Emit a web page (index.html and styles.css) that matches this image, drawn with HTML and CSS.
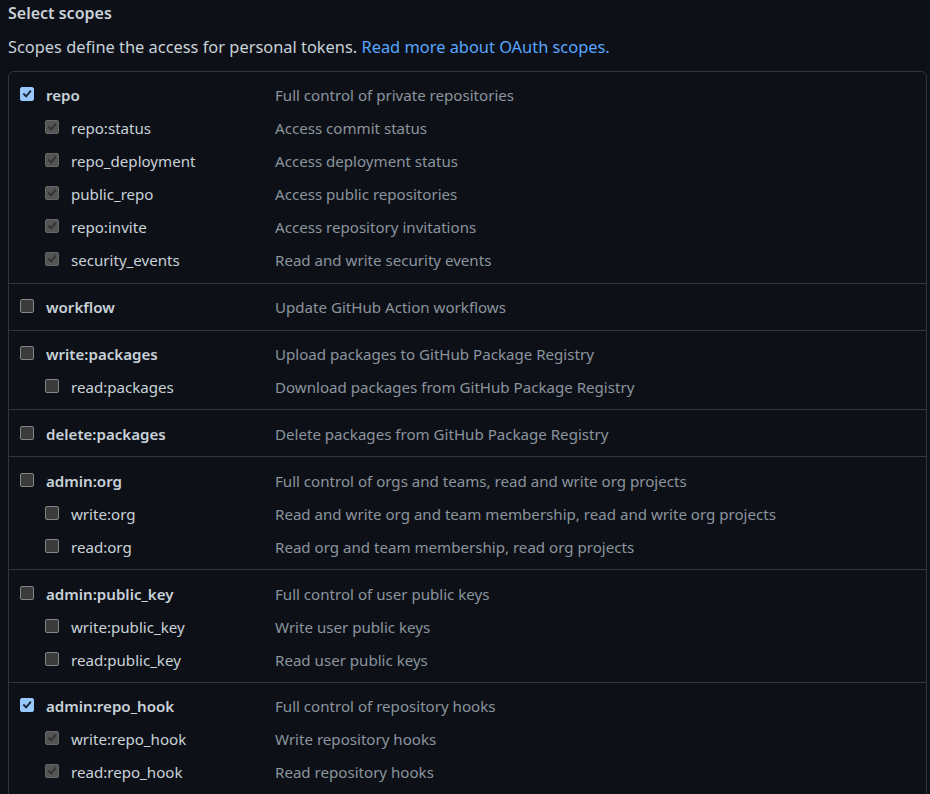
FILE: index.html
```html
<!DOCTYPE html>
<html lang="en">
<head>
<meta charset="utf-8">
<title>Select scopes</title>
<link rel="stylesheet" href="styles.css">
</head>
<body>
<div class="page">
  <h3 class="title">Select scopes</h3>
  <p class="note">Scopes define the access for personal tokens. <a href="#" class="link">Read more about OAuth scopes.</a></p>

  <div class="card">
    <div class="group">
      <div class="row parent"><span class="name"><span class="cb on"><svg viewBox="0 0 14 14"><path d="M3.5 7.2 6 9.8 10.8 4"/></svg></span><b>repo</b></span><span class="desc">Full control of private repositories</span></div>
      <div class="row child"><span class="name"><span class="cb dis"><svg viewBox="0 0 14 14"><path d="M3.5 7.2 6 9.8 10.8 4"/></svg></span>repo:status</span><span class="desc">Access commit status</span></div>
      <div class="row child"><span class="name"><span class="cb dis"><svg viewBox="0 0 14 14"><path d="M3.5 7.2 6 9.8 10.8 4"/></svg></span>repo_deployment</span><span class="desc">Access deployment status</span></div>
      <div class="row child"><span class="name"><span class="cb dis"><svg viewBox="0 0 14 14"><path d="M3.5 7.2 6 9.8 10.8 4"/></svg></span>public_repo</span><span class="desc">Access public repositories</span></div>
      <div class="row child"><span class="name"><span class="cb dis"><svg viewBox="0 0 14 14"><path d="M3.5 7.2 6 9.8 10.8 4"/></svg></span>repo:invite</span><span class="desc">Access repository invitations</span></div>
      <div class="row child"><span class="name"><span class="cb dis"><svg viewBox="0 0 14 14"><path d="M3.5 7.2 6 9.8 10.8 4"/></svg></span>security_events</span><span class="desc">Read and write security events</span></div>
    </div>
    <div class="group">
      <div class="row parent"><span class="name"><span class="cb"></span><b>workflow</b></span><span class="desc">Update GitHub Action workflows</span></div>
    </div>
    <div class="group">
      <div class="row parent"><span class="name"><span class="cb"></span><b>write:packages</b></span><span class="desc">Upload packages to GitHub Package Registry</span></div>
      <div class="row child"><span class="name"><span class="cb"></span>read:packages</span><span class="desc">Download packages from GitHub Package Registry</span></div>
    </div>
    <div class="group">
      <div class="row parent"><span class="name"><span class="cb"></span><b>delete:packages</b></span><span class="desc">Delete packages from GitHub Package Registry</span></div>
    </div>
    <div class="group">
      <div class="row parent"><span class="name"><span class="cb"></span><b>admin:org</b></span><span class="desc">Full control of orgs and teams, read and write org projects</span></div>
      <div class="row child"><span class="name"><span class="cb"></span>write:org</span><span class="desc">Read and write org and team membership, read and write org projects</span></div>
      <div class="row child"><span class="name"><span class="cb"></span>read:org</span><span class="desc">Read org and team membership, read org projects</span></div>
    </div>
    <div class="group">
      <div class="row parent"><span class="name"><span class="cb"></span><b>admin:public_key</b></span><span class="desc">Full control of user public keys</span></div>
      <div class="row child"><span class="name"><span class="cb"></span>write:public_key</span><span class="desc">Write user public keys</span></div>
      <div class="row child"><span class="name"><span class="cb"></span>read:public_key</span><span class="desc">Read user public keys</span></div>
    </div>
    <div class="group last">
      <div class="row parent"><span class="name"><span class="cb on"><svg viewBox="0 0 14 14"><path d="M3.5 7.2 6 9.8 10.8 4"/></svg></span><b>admin:repo_hook</b></span><span class="desc">Full control of repository hooks</span></div>
      <div class="row child"><span class="name"><span class="cb dis"><svg viewBox="0 0 14 14"><path d="M3.5 7.2 6 9.8 10.8 4"/></svg></span>write:repo_hook</span><span class="desc">Write repository hooks</span></div>
      <div class="row child"><span class="name"><span class="cb dis"><svg viewBox="0 0 14 14"><path d="M3.5 7.2 6 9.8 10.8 4"/></svg></span>read:repo_hook</span><span class="desc">Read repository hooks</span></div>
    </div>
  </div>
</div>
</body>
</html>
```

FILE: styles.css
```css
html, body {
  margin: 0;
  padding: 0;
  background: #0d1117;
}
body {
  font-family: "Noto Sans", "Open Sans", sans-serif;
  font-size: 15.1px;
  color: #c9d1d9;
  overflow: hidden;
  height: 794px;
}
.page {
  padding: 2px 3px 0 8px;
}
.title {
  margin: 0;
  font-size: 16px;
  font-weight: 600;
  line-height: 22px;
}
.note {
  margin: 11px 0 0;
  font-size: 16.4px;
  line-height: 24px;
}
.link {
  color: #58a6ff;
  text-decoration: none;
}
.card {
  margin-top: 12px;
  border: 1px solid #30363d;
  border-radius: 6px;
}
.group {
  padding: 7px 0 6px;
}
.group.last {
  padding-bottom: 20px;
}
.group + .group {
  border-top: 1px solid #30363d;
}
.row {
  display: grid;
  grid-template-columns: 266px 1fr;
  align-items: center;
  height: 32.94px;
}
.name {
  display: flex;
  align-items: center;
  gap: 12px;
  padding-left: 11px;
}
.child .name {
  padding-left: 36px;
}
.name b {
  font-weight: 600;
}
.desc {
  color: #8b949e;
}
.cb {
  flex: none;
  width: 14px;
  height: 14px;
  box-sizing: border-box;
  border: 1px solid #858585;
  border-radius: 2px;
  background: #3b3b3b;
  position: relative;
  top: -1px;
}
.cb svg {
  display: block;
  width: 12px;
  height: 12px;
}
.cb path {
  fill: none;
  stroke-width: 2.2;
  stroke-linecap: square;
}
.cb.on {
  background: #99c8ff;
  border-color: #99c8ff;
}
.cb.on path {
  stroke: #1c2433;
}
.cb.dis {
  background: #545454;
  border-color: #666666;
}
.cb.dis path {
  stroke: #323232;
}
```
